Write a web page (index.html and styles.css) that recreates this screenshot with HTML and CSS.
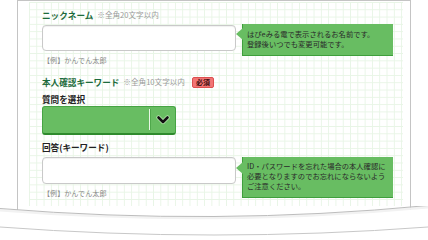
FILE: index.html
```html
<!DOCTYPE html>
<html lang="ja">
<head>
<meta charset="utf-8">
<link rel="stylesheet" href="styles.css">
</head>
<body>
<div class="page">
  <div class="card">
    <div class="grid">
      <div class="label-row"><span class="label green">ニックネーム</span><span class="note">※全角20文字以内</span></div>
      <div class="field-row first">
        <div class="field-col">
          <div class="input"></div>
          <div class="example">【例】かんでん太郎</div>
        </div>
        <div class="tip tip1">はぴeみる電で表示されるお名前です。<br>登録後いつでも変更可能です。</div>
      </div>

      <div class="label-row second"><span class="label green">本人確認キーワード</span><span class="note">※全角10文字以内</span><span class="badge">必須</span></div>
      <div class="sub-label">質問を選択</div>
      <div class="select">
        <div class="select-value"></div>
        <div class="select-divider"></div>
        <div class="select-arrow">
          <svg width="14" height="10" viewBox="0 0 14 10">
            <polyline points="2.5,2.5 7,7 11.5,2.5" fill="none" stroke="#b8e8b0" stroke-width="4.2" stroke-linecap="round" stroke-linejoin="round"/>
            <polyline points="2.5,2.5 7,7 11.5,2.5" fill="none" stroke="#111" stroke-width="2.6" stroke-linecap="round" stroke-linejoin="round"/>
          </svg>
        </div>
      </div>
      <div class="sub-label answer">回答(キーワード)</div>
      <div class="field-row">
        <div class="field-col">
          <div class="input input2"></div>
          <div class="example">【例】かんでん太郎</div>
        </div>
        <div class="tip tip2">ID・パスワードを忘れた場合の本人確認に<br>必要となりますのでお忘れにならないよう<br>ご注意ください。</div>
      </div>
    </div>
  </div>
  <svg class="edge" width="428" height="34" viewBox="0 0 428 34">
    <line x1="17.5" y1="0" x2="17.5" y2="4" stroke="#c4c4c4" stroke-width="1"/>
    <line x1="410.5" y1="0" x2="410.5" y2="4" stroke="#c4c4c4" stroke-width="1"/>
    <path d="M0,3 Q214,20 428,0 L428,2.5 Q214,22.5 0,5.5 Z" fill="#f2f2f2"/>
    <path d="M0,2.5 Q214,20 428,-0.5" fill="none" stroke="#bdbdbd" stroke-width="1"/>
    <path d="M0,21 Q214,37 428,21" fill="none" stroke="#c8c8c8" stroke-width="1"/>
  </svg>
</div>
</body>
</html>
```

FILE: styles.css
```css
* { box-sizing: border-box; }
html, body { margin: 0; padding: 0; background: #fff; }
body {
  font-family: "Noto Sans CJK JP", "Noto Sans", sans-serif;
  color: #222;
  width: 428px;
  height: 240px;
  overflow: hidden;
}
.page { width: 428px; }
.card {
  margin-left: 17px;
  width: 394px;
  border: 1px solid #c4c4c4;
  border-bottom: none;
  padding: 1px 7px 0 11px;
}
.grid {
  height: 204px;
  padding: 7px 0 0 13px;
  background-color: #fff;
  background-image:
    linear-gradient(to right, #e8f5e6 1px, transparent 1px),
    linear-gradient(to bottom, #e8f5e6 1px, transparent 1px);
  background-size: 7.3px 7.3px;
}
.label-row {
  display: flex;
  align-items: center;
  height: 12px;
  line-height: 12px;
}
.label {
  font-size: 8.6px;
  font-weight: bold;
}
.green { color: #1d6b3c; }
.note {
  font-size: 7.6px;
  color: #9a9a9a;
  margin-left: 4px;
}
.badge {
  margin-left: 7px;
  height: 11px;
  line-height: 9px;
  font-size: 7px;
  font-weight: bold;
  color: #3a0c0c;
  background: #f27474;
  border: 1px solid #dc5050;
  border-radius: 2px;
  padding: 0 3px;
}
.field-row {
  display: flex;
  align-items: flex-start;
  margin-top: 4px;
}
.field-col { width: 194px; }
.input {
  height: 26px;
  background: #fff;
  border: 1px solid #c9c9c9;
  border-radius: 4px;
  box-shadow: inset 0 1px 1px rgba(0,0,0,0.06);
}
.input2 { height: 27px; }
.example {
  margin-top: 3px;
  height: 12px;
  line-height: 12px;
  font-size: 7.1px;
  color: #8a8a8a;
  padding-left: 1px;
}
.tip {
  position: relative;
  margin-left: 6px;
  width: 151px;
  background: #68bd62;
  border-left: 1px solid #3f9f3c;
  border-bottom: 1px solid #3f9f3c;
  color: #2a2a2a;
  font-size: 7.3px;
  line-height: 10px;
  padding: 5px 4px 5px 4px;
  white-space: nowrap;
}
.tip::before {
  content: "";
  position: absolute;
  left: -7px;
  top: 4px;
  border-style: solid;
  border-width: 6px 7px 6px 0;
  border-color: transparent #68bd62 transparent transparent;
}
.tip1 { margin-top: -1px; height: 32px; padding-top: 5px; }
.tip2 { height: 41px; padding-top: 4px; }
.tip2::before { top: 5px; }
.second { margin-top: 10px; }
.sub-label {
  margin-top: 5px;
  height: 12px;
  line-height: 12px;
  font-size: 8.6px;
  font-weight: bold;
  color: #222;
}
.answer { margin-top: 6px; }
.select {
  margin-top: 1px;
  width: 134px;
  height: 29px;
  display: flex;
  align-items: stretch;
  background: #68bd62;
  border: 1px solid #46a443;
  border-bottom: 2px solid #2f8a2d;
  border-radius: 3px;
}
.select-value { width: 106px; }
.select-divider {
  width: 1px;
  margin: 2px 0 3px;
  background: #e8f7e4;
  box-shadow: 1px 0 0 #4fa84b;
}
.select-arrow {
  flex: 1;
  display: flex;
  align-items: center;
  justify-content: center;
  padding-bottom: 1px;
}
.select-arrow svg { display: block; }
.edge { display: block; }
```
